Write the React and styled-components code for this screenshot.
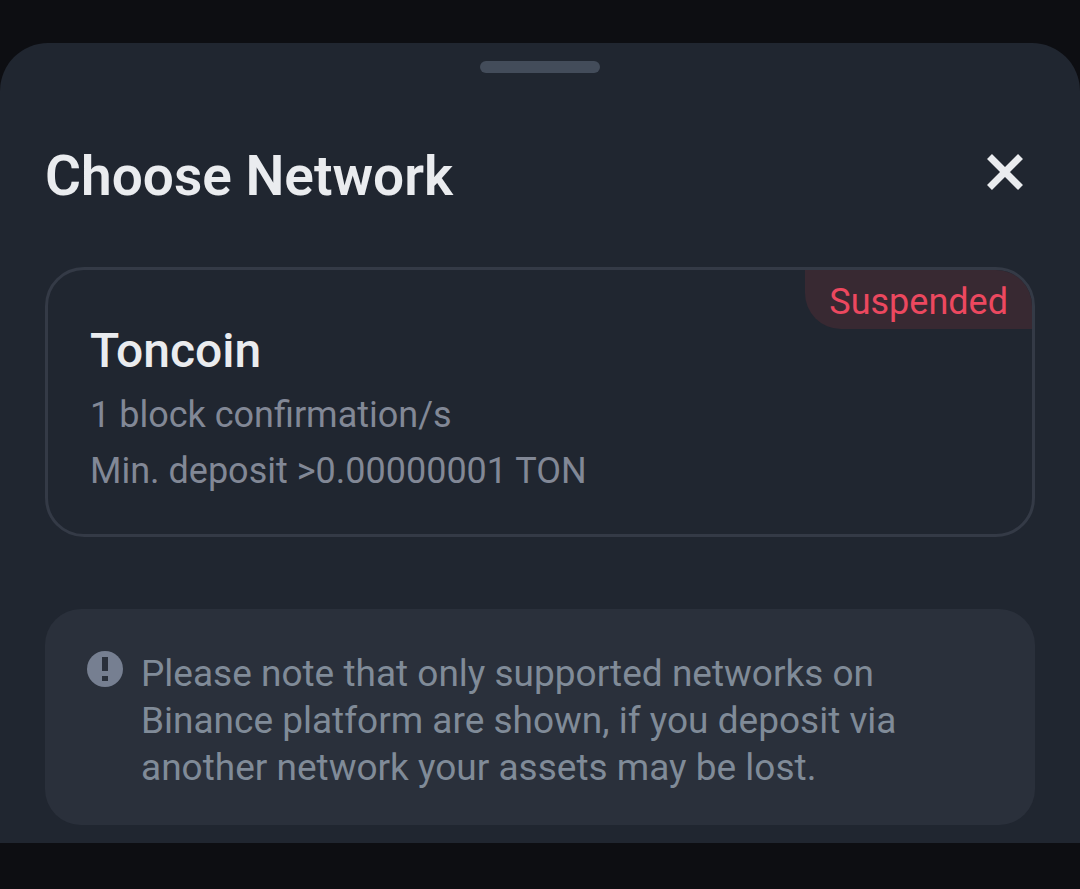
import React from "react";
import styled, { createGlobalStyle } from "styled-components";

const GlobalStyle = createGlobalStyle`
  *, *::before, *::after { box-sizing: border-box; }
  body {
    margin: 0;
    background: #0d0e12;
    font-family: Roboto, "Liberation Sans", sans-serif;
  }
`;

const Page = styled.div`
  padding: 43px 0 46px;
`;

const Sheet = styled.main`
  display: flex;
  flex-direction: column;
  padding: 18px 45px;
  background: #202630;
  border-radius: 48px 48px 0 0;
`;

const Handle = styled.div`
  align-self: center;
  width: 120px;
  height: 12px;
  border-radius: 6px;
  background: #434c5a;
`;

const Header = styled.header`
  display: flex;
  align-items: center;
  justify-content: space-between;
  margin: 67px 0 55px;
`;

const Title = styled.h1`
  margin: 0;
  font-size: 55px;
  line-height: 72px;
  font-weight: 600;
  color: #eaecef;
`;

const CloseButton = styled.button`
  display: flex;
  padding: 0 12px 8px;
  border: 0;
  background: none;
  color: #eaecef;
  cursor: pointer;
`;

const NetworkCard = styled.button`
  position: relative;
  display: flex;
  flex-direction: column;
  align-items: flex-start;
  padding: 49px 42px 35px;
  border: 3px solid #343a46;
  border-radius: 39px;
  background: none;
  font-family: inherit;
  text-align: left;
  overflow: hidden;
  cursor: pointer;
`;

const Badge = styled.span`
  position: absolute;
  top: 0;
  right: 0;
  padding: 6px 24px 1px;
  border-bottom-left-radius: 36px;
  background: #382932;
  color: #ec485f;
  font-size: 36px;
  line-height: 52px;
`;

const NetworkName = styled.span`
  margin-bottom: 4px;
  font-size: 48px;
  line-height: 64px;
  font-weight: 500;
  color: #eaecef;
`;

const Detail = styled.span`
  font-size: 36px;
  line-height: 56px;
  color: #828896;
`;

const Notice = styled.section`
  display: flex;
  align-items: flex-start;
  gap: 18px;
  margin-top: 72px;
  padding: 41px 42px 34px;
  border-radius: 36px;
  background: #2a303b;
`;

const NoticeIcon = styled.svg`
  flex: none;
  margin-top: 1px;
`;

const NoticeText = styled.p`
  margin: 0;
  font-size: 37px;
  line-height: 47px;
  color: #808b98;
`;

export default function App() {
  return (
    <Page>
      <GlobalStyle />
      <Sheet>
        <Handle />
        <Header>
          <Title>Choose Network</Title>
          <CloseButton type="button" aria-label="Close">
            <svg width="36" height="36" viewBox="0 0 36 36" fill="none" stroke="currentColor" strokeWidth="7">
              <path d="M2.5 2.5L33.5 33.5M33.5 2.5L2.5 33.5" />
            </svg>
          </CloseButton>
        </Header>
        <NetworkCard type="button">
          <Badge>Suspended</Badge>
          <NetworkName>Toncoin</NetworkName>
          <Detail>1 block confirmation/s</Detail>
          <Detail>Min. deposit &gt;0.00000001 TON</Detail>
        </NetworkCard>
        <Notice>
          <NoticeIcon width="36" height="36" viewBox="0 0 36 36" aria-hidden="true">
            <circle cx="18" cy="18" r="18" fill="#767f91" />
            <path d="M15 6h6v14h-6zM15 25h6v5h-6z" fill="#2a303b" />
          </NoticeIcon>
          <NoticeText>
            Please note that only supported networks on Binance platform are shown, if you deposit via
            another network your assets may be lost.
          </NoticeText>
        </Notice>
      </Sheet>
    </Page>
  );
}
